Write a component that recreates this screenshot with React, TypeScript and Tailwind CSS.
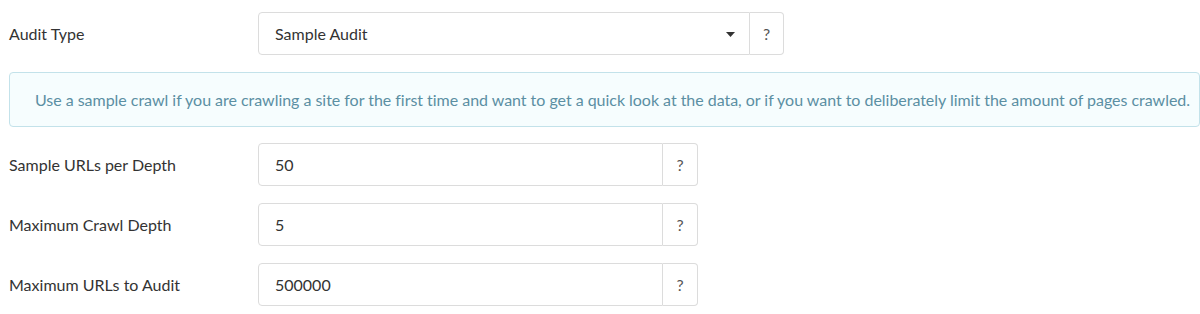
import React from "react";

function Row({ label, value, mt }: { label: string; value: string; mt: string }) {
  return (
    <div className={`flex items-center ${mt}`}>
      <div className="w-[258px] pl-[9px] text-[16px] text-[#333]">{label}</div>
      <div className="flex h-[43px]">
        <div className="flex w-[405px] items-center rounded-l-[4px] border border-[#dcdcdc] bg-white pl-[16px] text-[16px] text-[#333]">
          {value}
        </div>
        <div className="flex w-[35px] items-center justify-center rounded-r-[4px] border border-l-0 border-[#dcdcdc] bg-white text-[16px] text-[#555]">
          ?
        </div>
      </div>
    </div>
  );
}

export default function App() {
  return (
    <div className="h-[314px] w-[1200px] overflow-hidden bg-white pt-[12px]" style={{ fontFamily: "Lato, 'Noto Sans', sans-serif" }}>
      <div className="flex items-center">
        <div className="w-[258px] pl-[9px] text-[16px] text-[#333]">Audit Type</div>
        <div className="flex h-[43px]">
          <div className="flex w-[492px] items-center justify-between rounded-l-[4px] border border-[#dcdcdc] bg-white pl-[16px] pr-[14px] text-[16px] text-[#333]">
            <span>Sample Audit</span>
            <svg width="9" height="5" viewBox="0 0 9 5" className="mt-[1px]">
              <path d="M0 0 L9 0 L4.5 5 Z" fill="#333" />
            </svg>
          </div>
          <div className="flex w-[34px] items-center justify-center rounded-r-[4px] border border-l-0 border-[#dcdcdc] bg-white text-[16px] text-[#555]">
            ?
          </div>
        </div>
      </div>

      <div className="ml-[9px] mt-[17px] flex h-[55px] w-[1191px] items-center rounded-[4px] border border-[#c3e2ea] bg-[#f6fdfe] pl-[25px] text-[16px] tracking-[-0.03px] text-[#5b8fa3]">
        Use a sample crawl if you are crawling a site for the first time and want to get a quick look at the data, or if you want to deliberately limit the amount of pages crawled.
      </div>

      <Row label="Sample URLs per Depth" value="50" mt="mt-[16px]" />
      <Row label="Maximum Crawl Depth" value="5" mt="mt-[17px]" />
      <Row label="Maximum URLs to Audit" value="500000" mt="mt-[17px]" />
    </div>
  );
}
